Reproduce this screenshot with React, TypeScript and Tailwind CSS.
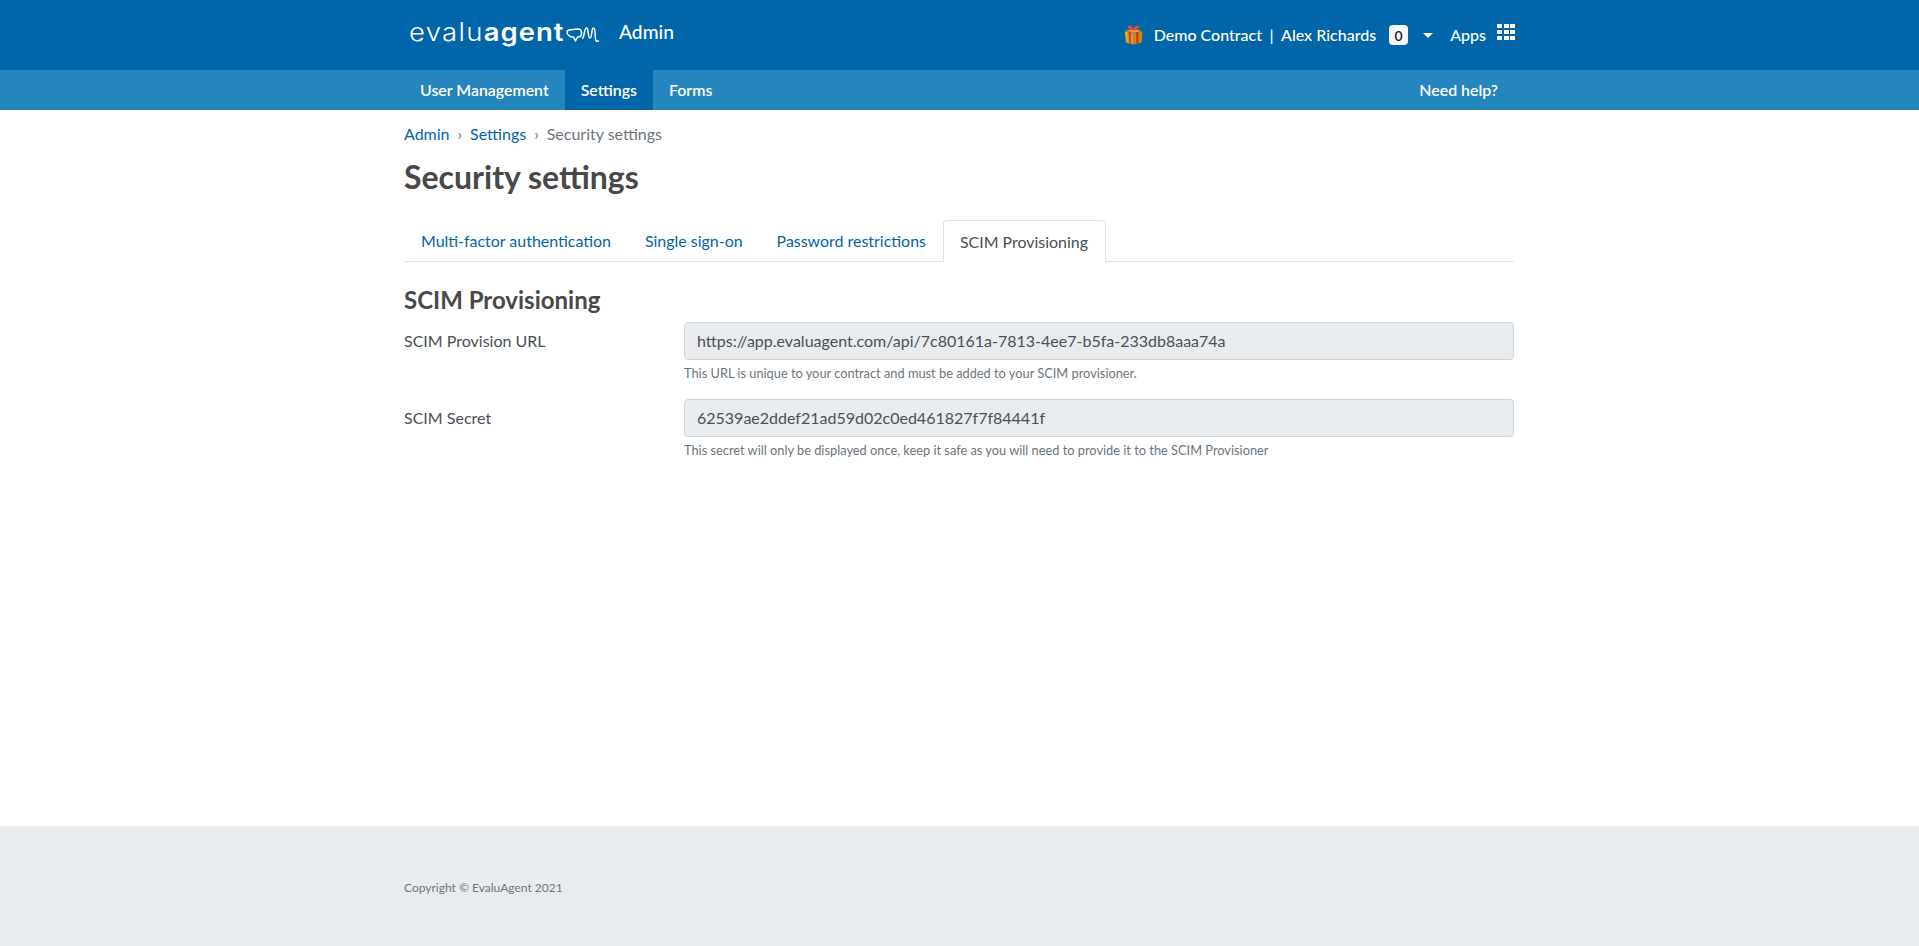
const tabs = ['Multi-factor authentication', 'Single sign-on', 'Password restrictions']

function Gift() {
  return (
    <svg width="19" height="20" viewBox="2.5 0.5 15 20" preserveAspectRatio="none" className="mr-[11px]">
      <path d="M3 7 L10 9 L10 20 L4 18 Z" fill="#e8a81e" />
      <path d="M10 9 L17 7 L16.5 18 L10 20 Z" fill="#c98a1a" />
      <path d="M3 6.5 L10 8.5 L17 6.5 L10 4.5 Z" fill="#e0a62a" />
      <path d="M6 6.5 L8.2 7.5 L8.2 19.4 L6.4 18.8 Z" fill="#d9442f" />
      <path d="M12 8 L14 7.2 L14 18.8 L12 19.4 Z" fill="#c73e2c" />
      <path d="M10 6 C5 5.5 4 1 6.5 1 C9 1 10 3 10 6 C10 3 11 1 13.5 1 C16 1 15 5.5 10 6 Z" fill="#e2473f" />
    </svg>
  )
}

function Logo() {
  return (
    <div className="flex items-center h-[30px] w-[196px] pl-[5px]">
      <div className="w-[153px] shrink-0">
        <div className="flex origin-left scale-x-[1.1] font-['Inter',sans-serif] text-[25px] leading-none">
          <span className="tracking-[1.2px] font-light">evalu</span>
          <span className="tracking-[0.9px] font-semibold">agent</span>
        </div>
      </div>
      <svg width="34" height="18" viewBox="0 0 34 18" fill="none" stroke="white" strokeWidth="1.5" strokeLinejoin="round" className="ml-[4px] mt-[3px]">
        <path d="M1 7 C1 5.5 3 5 5 4.8 L12 4 C14.5 4 15.5 5.5 15.5 8 C15.5 10.5 14 12 12 12 L11.5 12 L9.5 16 L7.5 12 C4 12 1 10 1 7 Z" />
        <path d="M16 13.5 C18.5 13.5 18 3 20.5 3 C23 3 21.5 13 24 13 C26.5 13 25 3 27.5 3 C30 3 28.5 13 30 15.5 C30.7 16.7 32 16.5 33 15.5" />
      </svg>
    </div>
  )
}

function AppsGrid() {
  return (
    <div className="grid grid-cols-3 gap-x-[1.5px] gap-y-[2px] ml-[11px] -mr-[1px] mb-[6px] w-[18px]">
      {Array.from({ length: 9 }).map((_, i) => (
        <span key={i} className="w-[5px] h-[4px] bg-white" />
      ))}
    </div>
  )
}

function Field({ label, value, help }: { label: string; value: string; help: string }) {
  return (
    <div className="flex mb-[16px]">
      <label className="w-[280px] shrink-0 pt-[7px] text-[16px] leading-[24px] text-[#495057]">{label}</label>
      <div className="flex-1">
        <div className="h-[38px] border border-[#ced4da] rounded-[4px] bg-[#e9ecef] px-[12px] py-[6px] text-[16px] leading-[24px] text-[#495057]">
          {value}
        </div>
        <div className="mt-[4px] text-[12.8px] leading-[19px] text-[#6c757d]">{help}</div>
      </div>
    </div>
  )
}

export default function App() {
  return (
    <div className="min-h-screen flex flex-col bg-white font-['Lato',sans-serif]">
      <header className="h-[70px] bg-[#0065a9] text-white">
        <div className="w-[1110px] ml-[404px] h-full flex items-center justify-between">
          <div className="flex items-center mb-[6px]">
            <Logo />
            <span className="ml-[19px] text-[19.2px] font-medium">Admin</span>
          </div>
          <div className="flex items-center text-[16px] font-medium">
            <Gift />
            <span>Demo Contract</span>
            <span className="mx-[7.5px]">|</span>
            <span>Alex Richards</span>
            <span className="ml-[13px] w-[19px] h-[20px] rounded-[4px] bg-[#f8f9fa] text-[#212529] text-[14px] font-semibold flex items-center justify-center">0</span>
            <span className="ml-[15px] w-0 h-0 border-x-[5px] border-x-transparent border-t-[5px] border-t-white" />
            <span className="ml-[17px]">Apps</span>
            <AppsGrid />
          </div>
        </div>
      </header>

      <nav className="h-[40px] bg-[#2586bd] text-white text-[15.9px] font-semibold">
        <div className="w-[1110px] ml-[404px] h-full flex items-center justify-between">
          <div className="flex h-full">
            <a className="px-[16px] flex items-center">User Management</a>
            <a className="px-[16px] flex items-center bg-[#0065a9]">Settings</a>
            <a className="px-[16px] flex items-center">Forms</a>
          </div>
          <a className="px-[16px] flex items-center h-full">Need help?</a>
        </div>
      </nav>

      <main className="flex-1 w-[1110px] ml-[404px]">
        <div className="flex items-center h-[24px] mt-[12px] text-[16px] text-[#6c757d]">
          <a className="text-[#0065a9]">Admin</a>
          <span className="mx-[8px]">›</span>
          <a className="text-[#0065a9]">Settings</a>
          <span className="mx-[8px]">›</span>
          <span>Security settings</span>
        </div>
        <h1 className="mt-[12px] text-[32px] leading-[38px] font-bold text-[#484848]">Security settings</h1>
        <div className="mt-[24px] h-[42px] flex border-b border-[#dee2e6] text-[15.95px]">
          {tabs.map((t) => (
            <a key={t} className="h-[42px] px-[17px] pt-[9px] leading-[24px] text-[#0065a9]">{t}</a>
          ))}
          <a className="h-[42px] pl-[16px] pr-[17px] pt-[9px] leading-[24px] text-[#495057] bg-white border border-[#dee2e6] border-b-white rounded-t-[4px]">SCIM Provisioning</a>
        </div>
        <h2 className="mt-[23px] mb-[8px] text-[24px] leading-[29px] font-bold text-[#484848]">SCIM Provisioning</h2>
        <Field
          label="SCIM Provision URL"
          value="https://app.evaluagent.com/api/7c80161a-7813-4ee7-b5fa-233db8aaa74a"
          help="This URL is unique to your contract and must be added to your SCIM provisioner."
        />
        <Field
          label="SCIM Secret"
          value="62539ae2ddef21ad59d02c0ed461827f7f84441f"
          help="This secret will only be displayed once, keep it safe as you will need to provide it to the SCIM Provisioner"
        />
      </main>

      <footer className="h-[120px] bg-[#e9ecef]">
        <div className="w-[1110px] ml-[404px] pt-[52px] text-[12px] leading-[19px] text-[#6c757d]">Copyright © EvaluAgent 2021</div>
      </footer>
    </div>
  )
}
